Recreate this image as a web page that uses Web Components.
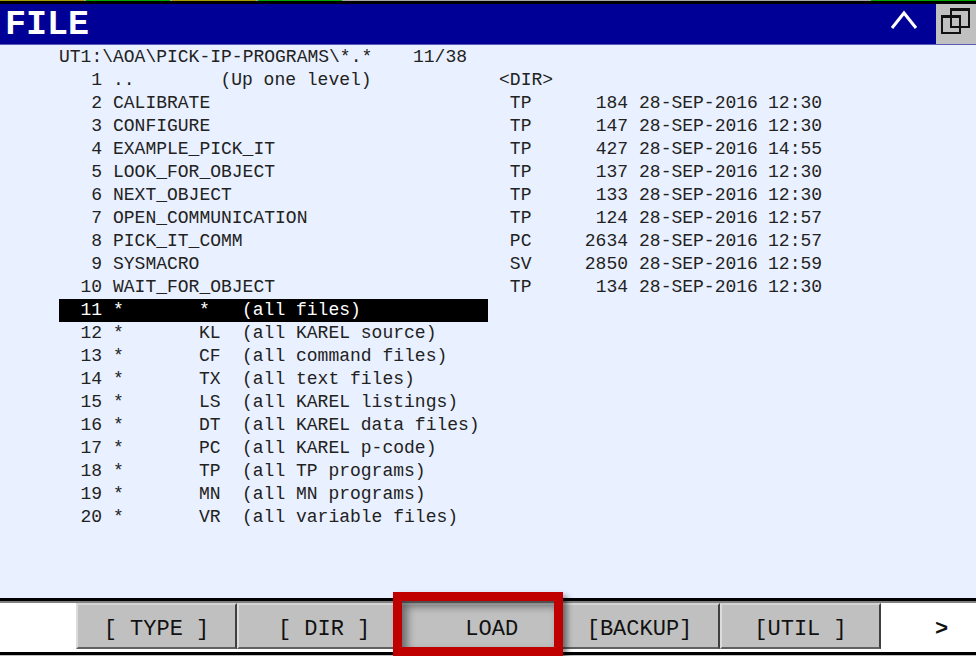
<!DOCTYPE html>
<html lang="en">
<head>
<meta charset="utf-8">
<title>FILE</title>
<style>
html,body{margin:0;height:100%}
body{font-family:"Liberation Mono","Courier New",monospace;color:#222;background:#e9f0ff;overflow:hidden}
</style>
</head>
<body>
<pendant-screen>
  <status-strip slot="top"></status-strip>
  <title-bar slot="top">FILE</title-bar>
  <file-list path="UT1:\AOA\PICK-IP-PROGRAMS\*.*" position="11/38"></file-list>
  <key-bar slot="bottom">
    <soft-key label="[ TYPE ]"></soft-key>
    <soft-key label=" [ DIR ]"></soft-key>
    <soft-key label="  LOAD" marked></soft-key>
    <soft-key label="[BACKUP]"></soft-key>
    <soft-key label="[UTIL ]"></soft-key>
    <soft-key label="  &gt;" plain></soft-key>
  </key-bar>
</pendant-screen>
<script>
class Base extends HTMLElement {
  connectedCallback() {
    if (!this.shadowRoot) this.attachShadow({mode: 'open'}).innerHTML = this.view();
  }
}

customElements.define('pendant-screen', class extends Base {
  view() { return `<style>
    :host{display:flex;flex-direction:column;min-height:100vh}
    main{flex:1}
  </style><slot name="top"></slot><main><slot></slot></main><slot name="bottom"></slot>`; }
});

customElements.define('status-strip', class extends Base {
  view() { return `<style>
    :host{display:grid;grid-template-columns:84px 84px 84px 84px 1fr 105px;gap:0 2px;height:1px;background:#a8a8a8;border-bottom:3px solid #000}
    .y{background:#a8a000}.g{background:#00a800}
  </style><i class="y"></i><i class="g"></i><i class="y"></i><i class="g"></i><i></i><i class="g"></i>`; }
});

customElements.define('title-bar', class extends Base {
  view() { return `<style>
    :host{display:flex;align-items:stretch;height:40px;background:#000096;color:#fff;border-bottom:1px solid #5a5ab4}
    h1{flex:1;margin:0;padding:2px 0 0 5px;font-size:35px;line-height:38px;font-weight:bold}
    button{border:0;margin:0;padding:0;background:none;display:grid;place-items:center}
    .up{width:64px}
    .win{width:40px;background:#c0c0c0;color:#111}
    svg{display:block}
  </style><h1><slot></slot></h1>
  <button class="up" aria-label="Up"><svg width="64" height="40" fill="none" stroke="#fff" stroke-width="3"><path d="M20 24 32 9 44 24"/></svg></button>
  <button class="win" aria-label="Windows"><svg width="40" height="40" fill="none" stroke="#111" stroke-width="2"><path d="M15 5h18v18H15zM6 12h18v17H6z"/><path d="M14 5.500h20M5 12.500h20" stroke-width="3"/></svg></button>`; }
});

const files = [
  ['CALIBRATE','TP','184','12:30'],['CONFIGURE','TP','147','12:30'],['EXAMPLE_PICK_IT','TP','427','14:55'],
  ['LOOK_FOR_OBJECT','TP','137','12:30'],['NEXT_OBJECT','TP','133','12:30'],['OPEN_COMMUNICATION','TP','124','12:57'],
  ['PICK_IT_COMM','PC','2634','12:57'],['SYSMACRO','SV','2850','12:59'],['WAIT_FOR_OBJECT','TP','134','12:30']];
const filters = [
  ['*','all files'],['KL','all KAREL source'],['CF','all command files'],['TX','all text files'],['LS','all KAREL listings'],
  ['DT','all KAREL data files'],['PC','all KAREL p-code'],['TP','all TP programs'],['MN','all MN programs'],['VR','all variable files']];

customElements.define('file-list', class extends Base {
  view() {
    const fileRows = files.map((f, i) => `<tr><td class="n">${i + 2}</td><td colspan="4">${f[0]}</td><td class="t"> ${f[1]}</td><td class="n">${f[2]}</td><td>28-SEP-2016</td><td>${f[3]}</td><td></td></tr>`).join('');
    const filterRows = filters.map((f, i) => `<tr${i ? '' : ' class="sel" aria-selected="true"'}><td class="n">${i + 11}</td><td colspan="2">*</td><td>${f[0]}</td><td>(${f[1]})</td><td colspan="5"></td></tr>`).join('');
    return `<style>
    :host{display:block;padding:1px 0 0 59px;font-size:18px;line-height:23px}
    table{width:100%;border-collapse:collapse;table-layout:fixed}
    caption{text-align:left;white-space:pre}
    caption span{display:inline-block;width:354px}
    td{padding:0;height:23px;white-space:pre;overflow:visible}
    .n{text-align:right;padding-right:11px}
    .t{padding-left:11px}
    .sel td:not(:last-child){background:#000;color:#fff}
  </style><table>
    <caption><span>${this.getAttribute('path')}</span>${this.getAttribute('position')}</caption>
    <colgroup><col style="width:54px"><col style="width:75px"><col style="width:11px"><col style="width:43px"><col style="width:246px"><col style="width:70px"><col style="width:81px"><col style="width:129px"><col style="width:54px"><col></colgroup>
    <tbody><tr><td class="n">1</td><td>..</td><td colspan="3">   (Up one level)</td><td class="t">&lt;DIR&gt;</td><td colspan="4"></td></tr>${fileRows}${filterRows}</tbody>
  </table>`; }
});

customElements.define('key-bar', class extends Base {
  view() { return `<style>
    :host{display:block;background:#000;padding:3px 0;border-bottom:1px solid #c0c0c0}
    nav{display:grid;grid-template-columns:76px repeat(5,minmax(0,1fr)) 95px;background:#fff;border-top:2px solid #808080;padding-bottom:3px;height:46px}
  </style><nav aria-label="Function keys"><span></span><slot></slot></nav>`; }
});

customElements.define('soft-key', class extends Base {
  view() { return `<style>
    :host{display:grid;position:relative}
    button{box-sizing:border-box;min-width:0;margin:0;padding:6px 0 0;font:22px "Liberation Mono","Courier New",monospace;color:#111;white-space:pre;background:#c0c0c0;border:2px solid;border-color:#d4d4d4 #404040 #606060 #dcdcdc}
    :host([plain]) button{background:#fff;border-color:#fff;font-weight:bold}
    .mark{position:absolute;inset:-11px -4px -7px -5px;border:9px solid #c00000;box-shadow:4px 4px 6px #0007,inset 5px 5px 8px #0007;pointer-events:none}
    :host([marked]){z-index:1}
  </style><button>${this.getAttribute('label').replace('>', '&gt;')}</button>${this.hasAttribute('marked') ? '<span class="mark"></span>' : ''}`; }
});
</script>
</body>
</html>
